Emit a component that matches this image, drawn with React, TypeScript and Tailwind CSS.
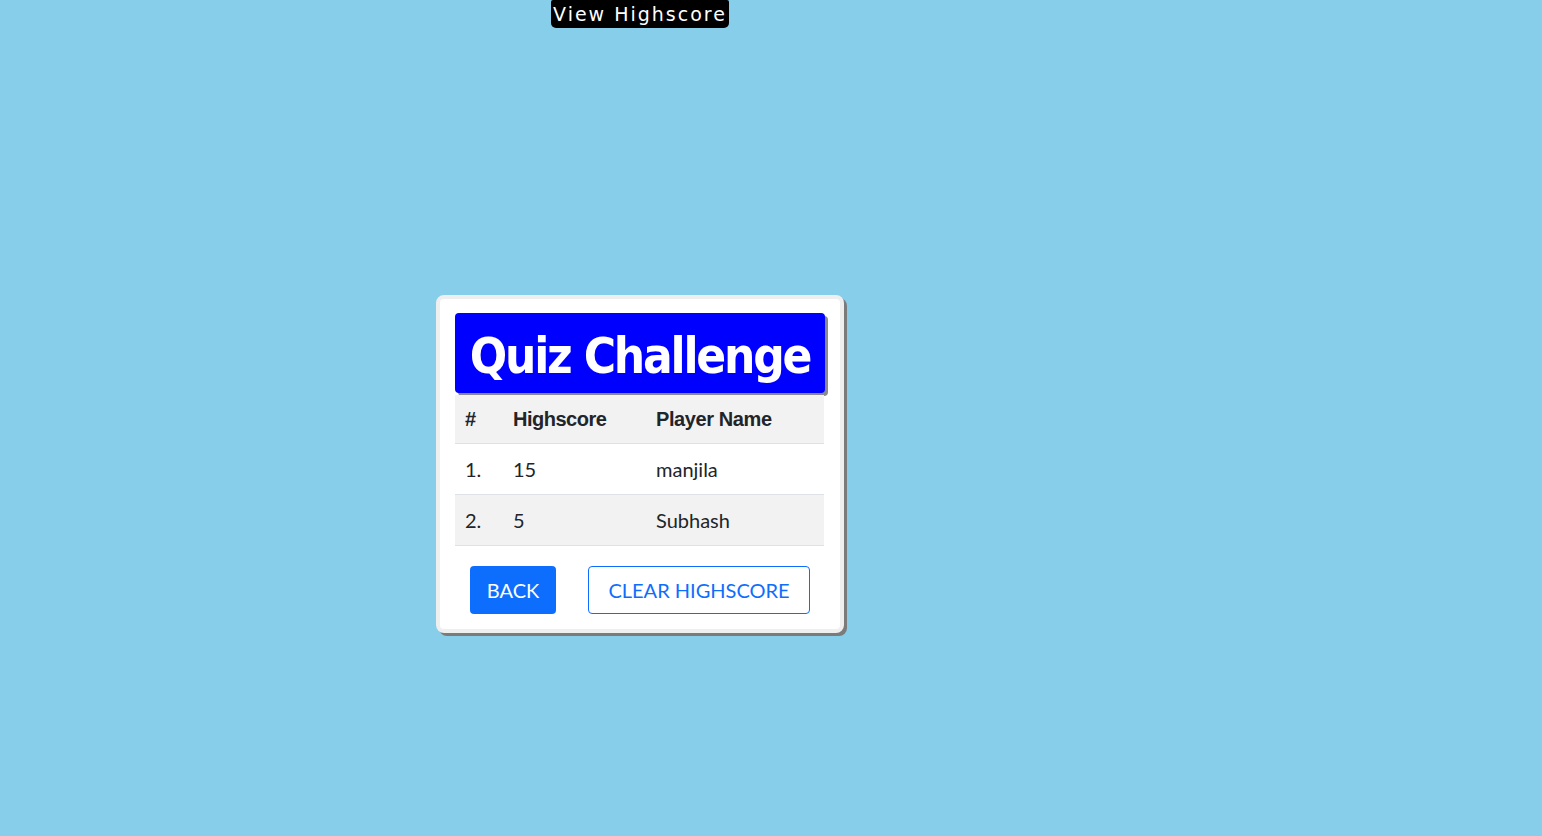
const scores = [
  { rank: '1.', score: 15, name: 'manjila' },
  { rank: '2.', score: 5, name: 'Subhash' },
];

const App: React.FC = () => {
  return (
    <div className="min-h-[836px] w-full bg-[#87ceeb]">
      <div className="flex w-[1280px] flex-col items-center">
        <div className="flex h-[28px] w-[178px] items-center justify-center rounded-b-[5px] rounded-t-[2px] bg-black font-['DejaVu_Sans',sans-serif] text-[19px] leading-none tracking-[2px] text-white">
          View Highscore
        </div>

        <div className="mt-[267px] w-[408px] rounded-[8px] border-[4px] border-[#efefef] bg-white px-[15px] pb-[15px] pt-[14px] shadow-[3px_3px_0_#7b7b7b]">
          <div className="flex h-[80px] w-[370px] items-center justify-center rounded-[4px] bg-[#0000ff] pt-[6px] shadow-[3px_3px_0_#8a8a8a]">
            <h1 className="whitespace-nowrap font-['DejaVu_Sans_Condensed','Liberation_Sans',sans-serif] text-[49px] font-bold leading-none tracking-[-2.2px] text-white">
              Quiz Challenge
            </h1>
          </div>

          <table className="mt-[2px] w-[369px] border-collapse text-[#212529]">
            <thead>
              <tr className="h-[48px] border-b border-[#dee2e6] bg-[#f2f2f2] font-['Liberation_Sans',sans-serif] text-[20px]">
                <th className="w-[50px] pl-[10px] text-left font-bold">#</th>
                <th className="w-[143px] pl-[8px] text-left font-bold tracking-[-0.5px]">Highscore</th>
                <th className="pl-[8px] text-left font-bold tracking-[-0.4px]">Player Name</th>
              </tr>
            </thead>
            <tbody className="font-['Lato',sans-serif] text-[20px]">
              {scores.map((s, i) => (
                <tr
                  key={s.rank}
                  className={`h-[51px] border-b border-[#dee2e6] ${i % 2 === 1 ? 'bg-[#f2f2f2]' : 'bg-white'}`}
                >
                  <td className="pl-[10px]">{s.rank}</td>
                  <td className="pl-[8px]">{s.score}</td>
                  <td className="pl-[8px]">{s.name}</td>
                </tr>
              ))}
            </tbody>
          </table>

          <div className="mt-[20px] flex gap-[32px] pl-[15px] font-['Lato',sans-serif] text-[20px]">
            <button className="h-[48px] w-[86px] rounded-[4px] bg-[#0d6efd] text-white">BACK</button>
            <button className="h-[48px] w-[222px] rounded-[4px] border border-[#0d6efd] bg-white text-[#0d6efd]">
              CLEAR HIGHSCORE
            </button>
          </div>
        </div>
      </div>
    </div>
  );
};

export default App;
